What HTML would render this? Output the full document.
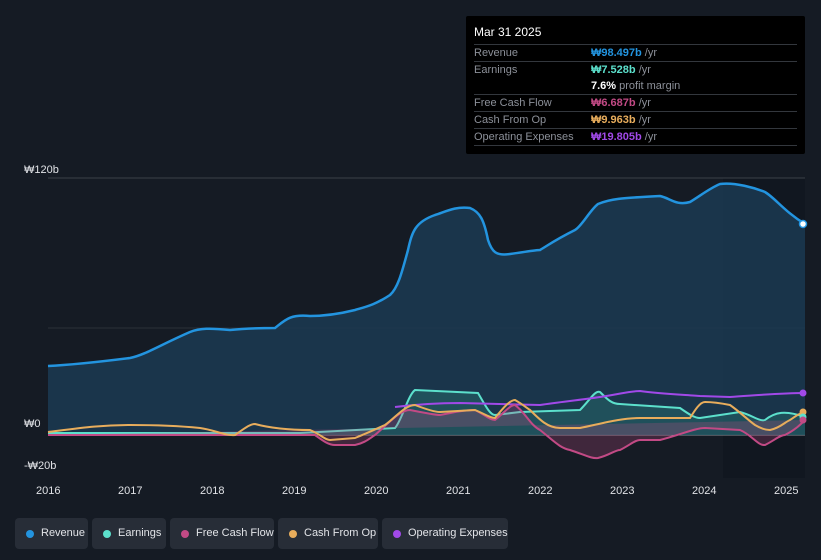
<!DOCTYPE html>
<html><head><meta charset="utf-8"><style>
body{margin:0;width:821px;height:560px;background:#151b24;font-family:"Liberation Sans",sans-serif;overflow:hidden;position:relative}
.tt{position:absolute;left:466px;top:16px;width:339px;height:138px;background:#000;border-radius:2px;font-size:11px;color:#8c9099}
.tt .h{color:#fff;font-size:12px;padding:9px 8px 5px}
.row{border-top:1px solid #33373d;margin:0 8px;height:16px;line-height:16px;position:relative}
.row span.v{position:absolute;left:117px}
.lg{position:absolute;top:518px;height:31px;background:#272d37;border-radius:4px;color:#e2e4e8;font-size:11px;line-height:31px;white-space:nowrap}
.lg i{position:absolute;left:11px;top:12px;width:8px;height:8px;border-radius:50%}
.lg span{position:absolute;left:26px}
.ax{position:absolute;color:#e0e2e6;font-size:11px}
</style></head><body>
<svg width="821" height="560" style="position:absolute;left:0;top:0">
<rect x="723" y="178" width="82" height="300" fill="#111720"/>
<line x1="48" y1="178" x2="805" y2="178" stroke="#3a4049"/>
<line x1="48" y1="328" x2="805" y2="328" stroke="#2a3039"/>
<line x1="48" y1="435" x2="805" y2="435" stroke="#8a8f96"/>
<path d="M48,366 C70,365 90,363 130,358 C145,355 160,345 190,332 C200,328 210,328 230,330 C240,329 250,328 275,328 C285,320 290,314 310,316 C320,316 335,315 355,310 C365,307 375,305 390,295 C398,288 402,272 408,250 C412,232 415,222 435,215 C445,212 455,206 470,208 C480,212 484,220 488,240 C492,252 496,256 510,254 C525,252 535,250 540,250 C550,244 555,240 575,230 C582,226 590,210 598,204 C610,199 620,198 660,196 C670,198 676,206 690,202 C700,196 710,188 720,184 C735,182 755,188 765,192 C775,198 785,212 805,224 L805,435 L48,435Z" fill="#1b3a52" fill-opacity="0.85"/>
<path d="M48,366 C70,365 90,363 130,358 C145,355 160,345 190,332 C200,328 210,328 230,330 C240,329 250,328 275,328 C285,320 290,314 310,316 C320,316 335,315 355,310 C365,307 375,305 390,295 C398,288 402,272 408,250 C412,232 415,222 435,215 C445,212 455,206 470,208 C480,212 484,220 488,240 C492,252 496,256 510,254 C525,252 535,250 540,250 C550,244 555,240 575,230 C582,226 590,210 598,204 C610,199 620,198 660,196 C670,198 676,206 690,202 C700,196 710,188 720,184 C735,182 755,188 765,192 C775,198 785,212 805,224" fill="none" stroke="#2394df" stroke-width="2.5"/>
<path d="M48,433 L300,433 L395,428 C402,420 408,395 415,390 L478,393 C485,405 490,415 495,415 L520,412 L580,410 C590,400 595,390 600,392 C608,400 612,404 620,404 L680,408 C690,415 695,418 700,418 L740,412 C752,415 760,422 765,420 C775,412 785,410 805,417 L805,435 L48,435Z" fill="#2d8f82" fill-opacity="0.3"/>
<path d="M48,433 L300,433 L395,428 C402,420 408,395 415,390 L478,393 C485,405 490,415 495,415 L520,412 L580,410 C590,400 595,390 600,392 C608,400 612,404 620,404 L680,408 C690,415 695,418 700,418 L740,412 C752,415 760,422 765,420 C775,412 785,410 805,417" fill="none" stroke="#5ce0cc" stroke-width="2"/>
<path d="M395,407 C420,404 440,403 460,403 L540,405 C560,402 580,400 600,397 C620,394 630,391 640,391 C660,394 690,395 700,396 L730,397 C760,395 780,393 805,393" fill="none" stroke="#a149e8" stroke-width="2"/>
<path d="M48,435 L315,435 C322,440 328,445 335,445 L355,445 C365,443 370,438 375,435 C390,422 400,410 410,410 C425,413 435,415 440,415 C455,412 465,410 475,410 C485,415 490,420 495,420 C505,412 510,405 515,405 C525,412 530,425 540,430 C555,442 560,448 570,450 C585,455 592,459 598,458 C610,455 615,450 620,450 C630,445 635,440 640,440 L660,440 C680,435 695,428 705,428 L740,430 C752,435 758,446 765,445 C775,440 780,435 785,435 C795,430 800,425 805,420" fill="#c24a85" fill-opacity="0.25" stroke="#c24a85" stroke-width="2"/>
<path d="M48,432 C80,428 100,425 130,425 C160,425 180,426 200,428 C215,430 225,436 235,435 C245,428 250,424 255,424 C270,428 290,430 310,430 C320,434 325,440 330,440 L355,438 C370,432 378,428 385,425 C395,418 405,405 415,405 C428,410 435,412 440,412 L475,410 C485,414 490,418 495,418 C503,408 510,400 515,400 C522,404 527,408 530,410 C540,420 548,428 560,428 L580,428 C600,424 620,418 640,418 L690,418 C695,410 700,402 705,402 C715,402 725,404 730,405 C740,412 748,420 755,425 C760,428 765,430 770,430 C780,428 785,422 790,420 C796,416 800,413 805,412" fill="none" stroke="#e8ad5c" stroke-width="2"/>
<circle cx="803" cy="224" r="3.5" fill="#fff" stroke="#2394df" stroke-width="1.5"/>
<circle cx="803" cy="393" r="3.5" fill="#a149e8"/>
<circle cx="803" cy="412" r="3.5" fill="#e8ad5c"/>
<circle cx="803" cy="417" r="3.5" fill="#5ce0cc"/>
<circle cx="803" cy="420" r="3.5" fill="#c24a85"/>
</svg>
<div class="ax" style="left:24px;top:164px">₩120b</div>
<div class="ax" style="left:24px;top:418px">₩0</div>
<div class="ax" style="left:24px;top:460px">-₩20b</div>
<div class="ax" style="left:36px;top:485px">2016</div>
<div class="ax" style="left:118px;top:485px">2017</div>
<div class="ax" style="left:200px;top:485px">2018</div>
<div class="ax" style="left:282px;top:485px">2019</div>
<div class="ax" style="left:364px;top:485px">2020</div>
<div class="ax" style="left:446px;top:485px">2021</div>
<div class="ax" style="left:528px;top:485px">2022</div>
<div class="ax" style="left:610px;top:485px">2023</div>
<div class="ax" style="left:692px;top:485px">2024</div>
<div class="ax" style="left:774px;top:485px">2025</div>
<div class="tt"><div class="h">Mar 31 2025</div>
<div class="row">Revenue<span class="v"><b style="color:#2394df">₩98.497b</b> /yr</span></div>
<div class="row">Earnings<span class="v"><b style="color:#5ce0cc">₩7.528b</b> /yr</span></div>
<div class="row" style="border:0"><span class="v"><b style="color:#fff">7.6%</b> profit margin</span></div>
<div class="row">Free Cash Flow<span class="v"><b style="color:#c24a85">₩6.687b</b> /yr</span></div>
<div class="row">Cash From Op<span class="v"><b style="color:#e8ad5c">₩9.963b</b> /yr</span></div>
<div class="row">Operating Expenses<span class="v"><b style="color:#a149e8">₩19.805b</b> /yr</span></div>
<div class="row"></div>
</div>
<div class="lg" style="left:15px;width:73px"><i style="background:#2394df"></i><span>Revenue</span></div>
<div class="lg" style="left:92px;width:74px"><i style="background:#5ce0cc"></i><span>Earnings</span></div>
<div class="lg" style="left:170px;width:104px"><i style="background:#c24a85"></i><span>Free Cash Flow</span></div>
<div class="lg" style="left:278px;width:100px"><i style="background:#e8ad5c"></i><span>Cash From Op</span></div>
<div class="lg" style="left:382px;width:126px"><i style="background:#a149e8"></i><span>Operating Expenses</span></div>
</body></html>
